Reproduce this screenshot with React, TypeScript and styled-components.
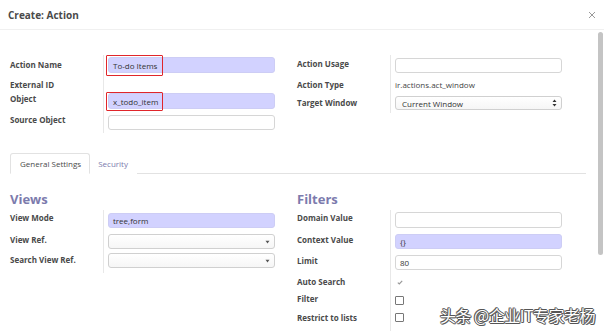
import React from 'react';
import styled, { createGlobalStyle } from 'styled-components';

const GlobalStyle = createGlobalStyle`
  html, body {
    margin: 0;
    padding: 0;
    background: #fff;
  }
  body {
    font-family: 'Open Sans', 'Liberation Sans', sans-serif;
    color: #4c4c4c;
  }
`;

const PURPLE = '#7c7bad';
const REQUIRED = '#d2d2ff';

const Dialog = styled.div`
  position: relative;
  width: 604px;
  height: 331px;
  overflow: hidden;
  display: flex;
  flex-direction: column;
`;

const Header = styled.div`
  height: 29px;
  flex-shrink: 0;
  border-bottom: 1px solid #f0f0f0;
  display: flex;
  align-items: center;
  justify-content: space-between;
  padding: 0 8px 0 8px;
`;

const Title = styled.h4`
  margin: 0;
  font-size: 10px;
  font-weight: 700;
  color: #4a4a4a;
`;

const CloseButton = styled.button`
  border: 0;
  background: none;
  padding: 0;
  width: 8px;
  height: 8px;
  display: flex;
  cursor: pointer;
`;

const Body = styled.div`
  flex: 1;
  min-height: 0;
  display: flex;
`;

const Sheet = styled.div`
  flex: 1;
  padding: 25px 10px 0 10px;
`;

const ScrollTrack = styled.div`
  width: 8px;
  padding-top: 2px;
  display: flex;
  justify-content: center;
`;

const ScrollThumb = styled.div`
  width: 5px;
  height: 223px;
  border-radius: 3px;
  background: #c4c4c4;
`;

const Group = styled.div<{ $top?: number }>`
  display: grid;
  grid-template-columns: 287px 1fr;
  margin-top: ${(p) => p.$top ?? 0}px;
`;

const Column = styled.div`
  display: flex;
  flex-direction: column;
`;

const Row = styled.div<{ $h: number }>`
  display: grid;
  grid-template-columns: 93px 1fr;
  height: ${(p) => p.$h}px;
`;

const Label = styled.div<{ $pad: number }>`
  padding-top: ${(p) => p.$pad}px;
  font-size: 8px;
  line-height: 11px;
  font-weight: 700;
  color: #4a4a4a;
  white-space: nowrap;
`;

const Field = styled.div<{ $off: number }>`
  position: relative;
  border-left: 1px solid #e8e8e8;
  padding-left: 4px;
  padding-top: ${(p) => p.$off}px;
`;

const Input = styled.div<{ $req?: boolean; $h?: number }>`
  box-sizing: border-box;
  width: 167px;
  height: ${(p) => p.$h ?? 16}px;
  border: 1px solid ${(p) => (p.$req ? '#cdcdf5' : '#d6d6d6')};
  border-radius: 3px;
  background: ${(p) => (p.$req ? REQUIRED : '#fff')};
  font-size: 8px;
  color: #333;
  padding: 0 4px;
  display: flex;
  align-items: center;
  white-space: nowrap;
`;

const Select = styled(Input)`
  justify-content: space-between;
  padding: 0 4px 0 6px;
  background: linear-gradient(#fff, #f6f6f6);
  border-color: #d0d0d0;
`;

const Value = styled.div`
  font-size: 8px;
  line-height: 11px;
  color: #444;
`;

const Annotation = styled.div<{ $top: number; $h: number }>`
  position: absolute;
  left: 2px;
  top: ${(p) => p.$top}px;
  width: 57px;
  height: ${(p) => p.$h}px;
  box-sizing: border-box;
  border: 1.5px solid #e0262b;
  border-radius: 1px;
`;

const TabBar = styled.div`
  display: flex;
  margin-top: 20px;
  border-bottom: 1px solid #e2e2e2;
`;

const Tab = styled.div<{ $active?: boolean }>`
  height: 19px;
  line-height: 19px;
  padding: 0 8px 0 ${(p) => (p.$active ? 9 : 7)}px;
  font-size: 8px;
  border: 1px solid ${(p) => (p.$active ? '#e2e2e2' : 'transparent')};
  border-bottom-color: ${(p) => (p.$active ? '#fff' : 'transparent')};
  border-radius: 3px 3px 0 0;
  margin-bottom: -1px;
  background: #fff;
  color: ${(p) => (p.$active ? '#4a4a4a' : PURPLE)};
`;

const Heading = styled.h3`
  margin: 0 0 3px 0;
  font-size: 13px;
  line-height: 16px;
  font-weight: 700;
  color: ${PURPLE};
`;

const Checkbox = styled.div`
  width: 9px;
  height: 9px;
  box-sizing: border-box;
  border: 1px solid #777;
  border-radius: 1px;
  background: #fff;
`;

const Watermark = styled.div`
  position: absolute;
  right: 9px;
  bottom: 5px;
  font-family: 'Noto Sans CJK SC', 'Noto Sans', sans-serif;
  font-size: 16px;
  line-height: 21px;
  color: #fff;
  letter-spacing: -0.5px;
  text-shadow: 1px 0 0 #555, -1px 0 0 #555, 0 1px 0 #555, 0 -1px 0 #555,
    1px 1px 0 #777, -1px -1px 0 #777;
`;

const UpDown = () => (
  <svg width="5" height="8" viewBox="0 0 5 8">
    <path d="M2.5 0.5 L4.5 3 L0.5 3 Z M2.5 7.5 L4.5 5 L0.5 5 Z" fill="#333" />
  </svg>
);

const Caret = () => (
  <svg width="5" height="4" viewBox="0 0 5 4">
    <path d="M0.5 0.8 L4.5 0.8 L2.5 3.5 Z" fill="#555" />
  </svg>
);

const Check = () => (
  <svg width="6" height="5" viewBox="0 0 6 5" style={{ display: 'block', marginLeft: 2 }}>
    <path d="M0.8 2.6 L2.3 4 L5.2 0.8" fill="none" stroke="#999" strokeWidth="1.2" />
  </svg>
);

const App = () => (
  <>
    <GlobalStyle />
    <Dialog>
      <Header>
        <Title>Create: Action</Title>
        <CloseButton aria-label="Close">
          <svg width="8" height="8" viewBox="0 0 8 8">
            <path d="M1 1 L7 7 M7 1 L1 7" stroke="#9a9a9a" strokeWidth="1" />
          </svg>
        </CloseButton>
      </Header>
      <Body>
        <Sheet>
          <Group>
            <Column>
              <Row $h={21}>
                <Label $pad={3.5}>Action Name</Label>
                <Field $off={2}>
                  <Input $req>To-do Items</Input>
                  <Annotation $top={0} $h={21} />
                </Field>
              </Row>
              <Row $h={15}>
                <Label $pad={2.5}>External ID</Label>
                <Field $off={0} />
              </Row>
              <Row $h={21}>
                <Label $pad={1.5}>Object</Label>
                <Field $off={2}>
                  <Input $req>x_todo_item</Input>
                  <Annotation $top={1} $h={19} />
                </Field>
              </Row>
              <Row $h={21}>
                <Label $pad={1.5}>Source Object</Label>
                <Field $off={3}>
                  <Input $h={15} />
                </Field>
              </Row>
            </Column>
            <Column>
              <Row $h={21}>
                <Label $pad={2.5}>Action Usage</Label>
                <Field $off={3}>
                  <Input $h={15} />
                </Field>
              </Row>
              <Row $h={17}>
                <Label $pad={2.5}>Action Type</Label>
                <Field $off={2.5}>
                  <Value>ir.actions.act_window</Value>
                </Field>
              </Row>
              <Row $h={20}>
                <Label $pad={3.5}>Target Window</Label>
                <Field $off={3}>
                  <Select $h={14}>
                    Current Window
                    <UpDown />
                  </Select>
                </Field>
              </Row>
            </Column>
          </Group>

          <TabBar>
            <Tab $active>General Settings</Tab>
            <Tab>Security</Tab>
          </TabBar>

          <Group $top={17}>
            <Column>
              <Heading>Views</Heading>
              <Row $h={21}>
                <Label $pad={1.5}>View Mode</Label>
                <Field $off={3}>
                  <Input $req $h={15}>tree,form</Input>
                </Field>
              </Row>
              <Row $h={21}>
                <Label $pad={2.5}>View Ref.</Label>
                <Field $off={3}>
                  <Select $h={15}>
                    <span />
                    <Caret />
                  </Select>
                </Field>
              </Row>
              <Row $h={21}>
                <Label $pad={1.5}>Search View Ref.</Label>
                <Field $off={1}>
                  <Select $h={15}>
                    <span />
                    <Caret />
                  </Select>
                </Field>
              </Row>
            </Column>
            <Column>
              <Heading>Filters</Heading>
              <Row $h={21}>
                <Label $pad={1.5}>Domain Value</Label>
                <Field $off={2}>
                  <Input />
                </Field>
              </Row>
              <Row $h={21}>
                <Label $pad={2.5}>Context Value</Label>
                <Field $off={3}>
                  <Input $req $h={15}>{'{}'}</Input>
                </Field>
              </Row>
              <Row $h={21}>
                <Label $pad={2.5}>Limit</Label>
                <Field $off={3}>
                  <Input $h={15}>80</Input>
                </Field>
              </Row>
              <Row $h={18}>
                <Label $pad={2.5}>Auto Search</Label>
                <Field $off={7}>
                  <Check />
                </Field>
              </Row>
              <Row $h={19}>
                <Label $pad={1.5}>Filter</Label>
                <Field $off={5}>
                  <Checkbox />
                </Field>
              </Row>
              <Row $h={21}>
                <Label $pad={1.5}>Restrict to lists</Label>
                <Field $off={3}>
                  <Checkbox />
                </Field>
              </Row>
            </Column>
          </Group>
        </Sheet>
        <ScrollTrack>
          <ScrollThumb />
        </ScrollTrack>
      </Body>
      <Watermark>头条 @企业IT专家老杨</Watermark>
    </Dialog>
  </>
);

export default App;
